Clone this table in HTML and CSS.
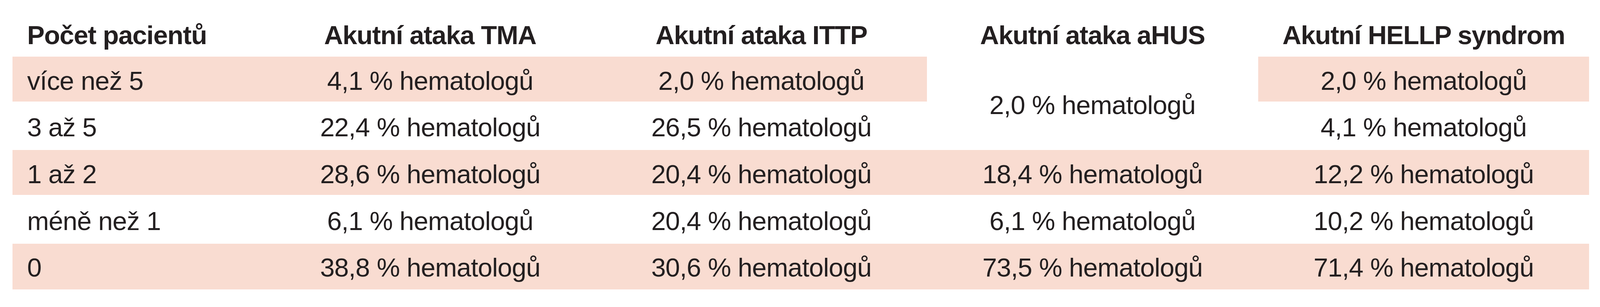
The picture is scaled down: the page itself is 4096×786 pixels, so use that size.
FILE: index.html
```html
<!DOCTYPE html>
<html lang="cs">
<head>
<meta charset="utf-8">
<title>Počet pacientů</title>
<link rel="stylesheet" href="styles.css">
</head>
<body>
<div class="table">
  <div class="cell head first">Počet pacientů</div>
  <div class="cell head">Akutní ataka TMA</div>
  <div class="cell head">Akutní ataka ITTP</div>
  <div class="cell head">Akutní ataka aHUS</div>
  <div class="cell head">Akutní HELLP syndrom</div>

  <div class="cell alt first">více než 5</div>
  <div class="cell alt">4,1 % hematologů</div>
  <div class="cell alt">2,0 % hematologů</div>
  <div class="cell merged">2,0 % hematologů</div>
  <div class="cell alt">2,0 % hematologů</div>

  <div class="cell first">3 až 5</div>
  <div class="cell">22,4 % hematologů</div>
  <div class="cell">26,5 % hematologů</div>
  <div class="cell">4,1 % hematologů</div>

  <div class="cell alt first">1 až 2</div>
  <div class="cell alt">28,6 % hematologů</div>
  <div class="cell alt">20,4 % hematologů</div>
  <div class="cell alt">18,4 % hematologů</div>
  <div class="cell alt">12,2 % hematologů</div>

  <div class="cell first">méně než 1</div>
  <div class="cell">6,1 % hematologů</div>
  <div class="cell">20,4 % hematologů</div>
  <div class="cell">6,1 % hematologů</div>
  <div class="cell">10,2 % hematologů</div>

  <div class="cell alt first">0</div>
  <div class="cell alt">38,8 % hematologů</div>
  <div class="cell alt">30,6 % hematologů</div>
  <div class="cell alt">73,5 % hematologů</div>
  <div class="cell alt">71,4 % hematologů</div>
</div>
</body>
</html>
```
FILE: styles.css
```css
html, body {
  margin: 0;
  padding: 0;
  background: #ffffff;
}

body {
  font-family: "Liberation Sans", Arial, sans-serif;
  color: #231f20;
}

.table {
  display: grid;
  grid-template-columns: 645px repeat(4, 847.75px);
  grid-template-rows: 140.7px 115px 115px 115px 115px 117px;
  row-gap: 4.6px;
  margin-left: 32.4px;
  width: 4036px;
}

.cell {
  font-size: 67px;
  line-height: 1;
  letter-spacing: -0.8px;
  text-align: center;
  white-space: nowrap;
  padding-top: 27.5px;
  box-sizing: border-box;
}

.cell.first {
  text-align: left;
  padding-left: 37px;
}

.cell.head {
  font-weight: bold;
  letter-spacing: -1.2px;
  padding-top: 56.2px;
}

.cell.alt {
  background: #f9dcd1;
}

.cell.merged {
  grid-row: span 2;
  background: #ffffff;
  padding-top: 90px;
}
```
